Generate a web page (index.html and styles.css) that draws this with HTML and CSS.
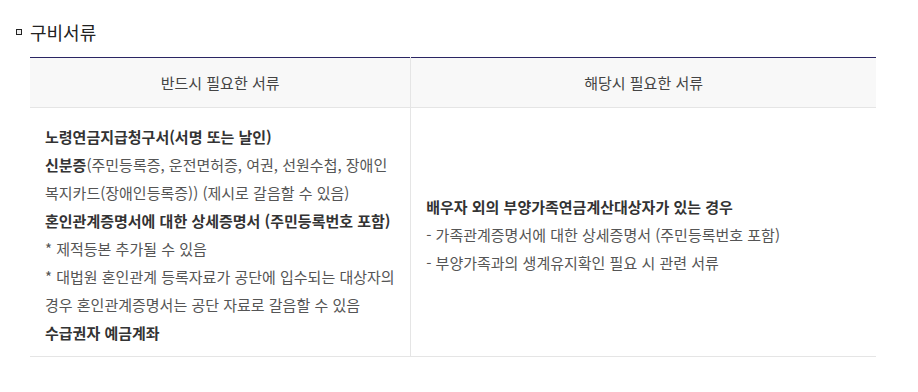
FILE: index.html
```html
<!DOCTYPE html>
<html lang="ko">
<head>
    <meta charset="UTF-8">
    <meta name="viewport" content="width=device-width, initial-scale=1.0">
    <title>구비서류</title>
    <link rel="stylesheet" href="styles.css">
</head>
<body>
    <h3 class="title">구비서류</h3>
    <table class="docs">
        <colgroup>
            <col class="col-must">
            <col>
        </colgroup>
        <thead>
            <tr>
                <th>반드시 필요한 서류</th>
                <th>해당시 필요한 서류</th>
            </tr>
        </thead>
        <tbody>
            <tr>
                <td>
                    <p><b>노령연금지급청구서(서명 또는 날인)</b></p>
                    <p><b>신분증</b>(주민등록증, 운전면허증, 여권, 선원수첩, 장애인 복지카드(장애인등록증)) (제시로 갈음할 수 있음)</p>
                    <p><b>혼인관계증명서에 대한 상세증명서 (주민등록번호 포함)</b></p>
                    <p>* 제적등본 추가될 수 있음</p>
                    <p>* 대법원 혼인관계 등록자료가 공단에 입수되는 대상자의 경우 혼인관계증명서는 공단 자료로 갈음할 수 있음</p>
                    <p><b>수급권자 예금계좌</b></p>
                </td>
                <td>
                    <p><b>배우자 외의 부양가족연금계산대상자가 있는 경우</b></p>
                    <p>- 가족관계증명서에 대한 상세증명서 (주민등록번호 포함)</p>
                    <p>- 부양가족과의 생계유지확인 필요 시 관련 서류</p>
                </td>
            </tr>
        </tbody>
    </table>
</body>
</html>
```

FILE: styles.css
```css
body{
    margin: 0;
    padding: 18px 42px 0 30px;
    background: #fff;
    font-family: "Noto Sans CJK KR", "Noto Sans", sans-serif;
    color: #555;
}
.title{
    position: relative;
    margin: 0 0 11px 0;
    font-size: 18px;
    font-weight: 400;
    line-height: 28px;
    color: #222;
}
.title::before{
    content: "";
    position: absolute;
    left: -14px;
    top: 11px;
    width: 4px;
    height: 4px;
    border: 1px solid #222;
    background: #eee;
}
.docs{
    width: 100%;
    border-collapse: collapse;
    border-top: 1px solid #2a2563;
    font-size: 15px;
}
.col-must{
    width: 45%;
}
.docs th{
    height: 49px;
    padding: 0;
    background: #f8f8f8;
    border-bottom: 1px solid #e5e5e5;
    font-weight: 400;
    color: #444;
    text-align: center;
}
.docs th + th,
.docs td + td{
    border-left: 1px solid #e5e5e5;
}
.docs td{
    padding: 15px 8px 9px 15px;
    border-bottom: 1px solid #e5e5e5;
    line-height: 28px;
    vertical-align: middle;
    word-break: keep-all;
}
.docs p{
    margin: 0;
}
.docs b{
    font-weight: 700;
    color: #333;
}
```
